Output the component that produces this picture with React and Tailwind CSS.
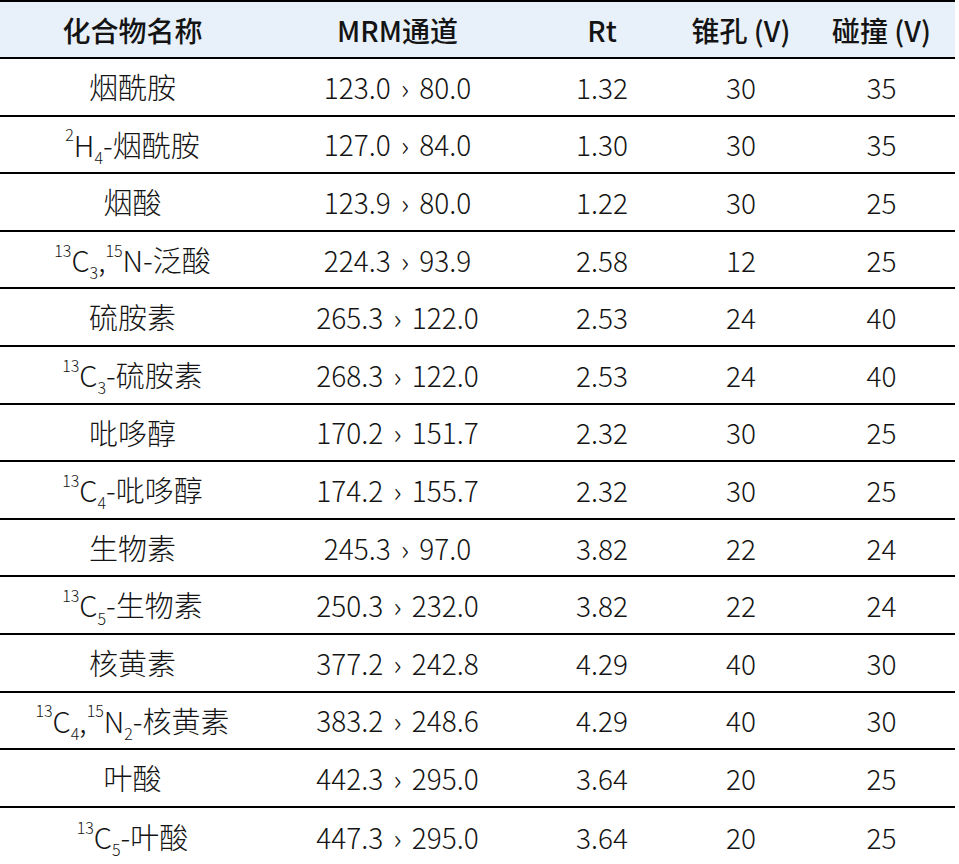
import React from "react";

const NUM = "font-['Noto_Sans_CJK_SC',sans-serif]";

const rows = [
  [<>烟酰胺</>, "123.0 › 80.0", "1.32", "30", "35"],
  [<><sup>2</sup>H<sub>4</sub>-烟酰胺</>, "127.0 › 84.0", "1.30", "30", "35"],
  [<>烟酸</>, "123.9 › 80.0", "1.22", "30", "25"],
  [<><sup>13</sup>C<sub>3</sub>,<sup>15</sup>N-泛酸</>, "224.3 › 93.9", "2.58", "12", "25"],
  [<>硫胺素</>, "265.3 › 122.0", "2.53", "24", "40"],
  [<><sup>13</sup>C<sub>3</sub>-硫胺素</>, "268.3 › 122.0", "2.53", "24", "40"],
  [<>吡哆醇</>, "170.2 › 151.7", "2.32", "30", "25"],
  [<><sup>13</sup>C<sub>4</sub>-吡哆醇</>, "174.2 › 155.7", "2.32", "30", "25"],
  [<>生物素</>, "245.3 › 97.0", "3.82", "22", "24"],
  [<><sup>13</sup>C<sub>5</sub>-生物素</>, "250.3 › 232.0", "3.82", "22", "24"],
  [<>核黄素</>, "377.2 › 242.8", "4.29", "40", "30"],
  [<><sup>13</sup>C<sub>4</sub>,<sup>15</sup>N<sub>2</sub>-核黄素</>, "383.2 › 248.6", "4.29", "40", "30"],
  [<>叶酸</>, "442.3 › 295.0", "3.64", "20", "25"],
  [<><sup>13</sup>C<sub>5</sub>-叶酸</>, "447.3 › 295.0", "3.64", "20", "25"],
];

const cols = "grid grid-cols-[265px_265px_144px_134px_147px]";

export default function App() {
  return (
    <div className="w-[959px] h-[864px] bg-white overflow-hidden text-[#141414] font-['Noto_Sans_CJK_SC',sans-serif]">
      <div className="w-[955px]">
        <div className={`${cols} h-[59px] border-t-2 border-b-2 border-black bg-[#e8f1f9] items-center text-center text-[28px] font-medium`}>
          <div>化合物名称</div>
          <div>MRM通道</div>
          <div>Rt</div>
          <div>锥孔 (V)</div>
          <div>碰撞 (V)</div>
        </div>
        {rows.map((r, i) => (
          <div
            key={i}
            className={`${cols} h-[57.6px] items-center text-center text-[28px] font-light ${i < rows.length - 1 ? "border-b-2 border-black" : ""}`}
          >
            <div className="text-[29px] [&_sup]:text-[16px] [&_sup]:top-[-0.95em] [&_sub]:text-[16px] [&_sub]:bottom-[-0.45em]">{r[0]}</div>
            <div className={`${NUM} [word-spacing:4px]`}>{r[1]}</div>
            <div className={NUM}>{r[2]}</div>
            <div className={NUM}>{r[3]}</div>
            <div className={NUM}>{r[4]}</div>
          </div>
        ))}
      </div>
    </div>
  );
}
